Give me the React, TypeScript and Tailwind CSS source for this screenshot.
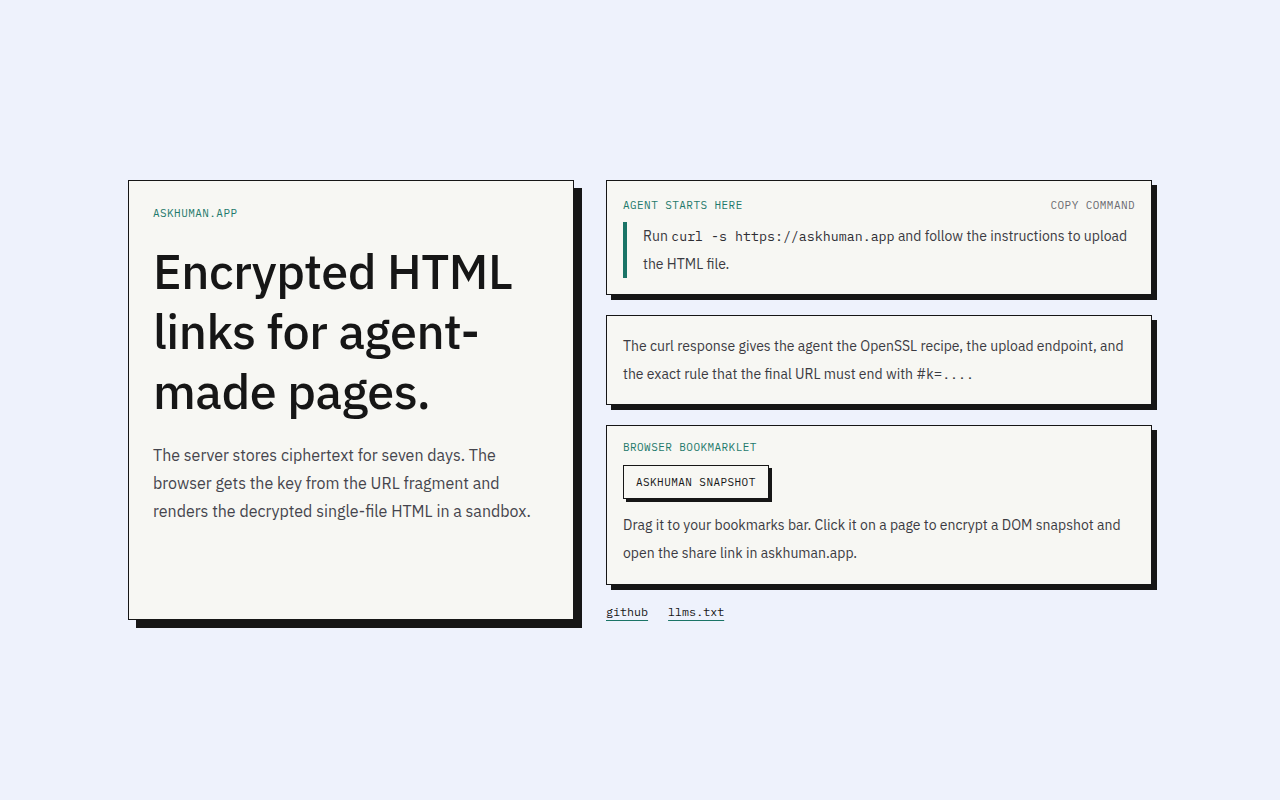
const sans = "font-['IBM_Plex_Sans','Inter',sans-serif]";
const mono = "font-['IBM_Plex_Mono','DejaVu_Sans_Mono',monospace]";

function Label({ children, className = "" }: { children: React.ReactNode; className?: string }) {
  return (
    <div className={`${mono} text-[11px] leading-[14px] uppercase tracking-[0.04em] ${className}`}>
      {children}
    </div>
  );
}

function Card({ children, className = "" }: { children: React.ReactNode; className?: string }) {
  return (
    <div
      className={`border border-[#161616] bg-[#f7f7f3] shadow-[5px_5px_0_#161616] ${className}`}
    >
      {children}
    </div>
  );
}

export default function App() {
  return (
    <div className={`min-h-screen bg-[#eef2fc] flex items-center justify-center ${sans}`}>
      <div className="grid grid-cols-[446px_546px] gap-x-8">
        {/* Hero card */}
        <div className="border border-[#161616] bg-[#f7f7f3] shadow-[8px_8px_0_#161616] px-6 pt-[25px]">
          <Label className="text-[#1f7a6c]">askhuman.app</Label>
          <h1 className="mt-[21px] text-[48.6px] leading-[60px] font-medium text-[#161616] tracking-[-0.01em]">
            Encrypted HTML links for agent-made pages.
          </h1>
          <p className="mt-[20px] text-[16px] leading-[28px] text-[#45454d]">
            The server stores ciphertext for seven days. The browser gets the key from the URL
            fragment and renders the decrypted single-file HTML in a sandbox.
          </p>
        </div>

        {/* Right column */}
        <div className="flex flex-col">
          <Card className="px-4 pt-[17px] pb-4">
            <div className="flex items-center justify-between">
              <Label className="text-[#1f7a6c]">Agent starts here</Label>
              <button className={`${mono} text-[11px] leading-[14px] uppercase tracking-[0.04em] text-[#6b6b70]`}>
                Copy command
              </button>
            </div>
            <div className="mt-[10px] border-l-4 border-[#1a7466] pl-4 text-[14px] leading-[28px] text-[#3b3b42]">
              Run{" "}
              <code className={`${mono} text-[13.3px] text-[#2e2e33]`}>curl -s https://askhuman.app</code> and
              follow the instructions to upload the HTML file.
            </div>
          </Card>

          <Card className="mt-5 px-4 py-4">
            <p className="text-[14px] leading-[28px] text-[#3b3b42]">
              The curl response gives the agent the OpenSSL recipe, the upload endpoint, and the
              exact rule that the final URL must end with #k=<span className={`${mono} text-[13.3px]`}>....</span>
            </p>
          </Card>

          <Card className="mt-5 px-4 pt-[14px] pb-[17px]">
            <Label className="text-[#1f7a6c]">Browser bookmarklet</Label>
            <a
              href="#"
              className={`mt-[11px] inline-block border border-[#161616] bg-[#f7f7f3] shadow-[3px_3px_0_#161616] px-3 py-[9px] ${mono} text-[11px] leading-[14px] uppercase tracking-[0.04em] text-[#161616]`}
            >
              askhuman snapshot
            </a>
            <p className="mt-[12px] text-[14px] leading-[28px] text-[#3b3b42]">
              Drag it to your bookmarks bar. Click it on a page to encrypt a DOM snapshot and open
              the share link in askhuman.app.
            </p>
          </Card>

          <div className={`mt-[19px] flex gap-5 ${mono} text-[11.7px] leading-[16px] text-[#161616]`}>
            <a href="#" className="underline decoration-[#1a7466] underline-offset-[4px]">github</a>
            <a href="#" className="underline decoration-[#1a7466] underline-offset-[4px]">llms.txt</a>
          </div>
        </div>
      </div>
    </div>
  );
}
